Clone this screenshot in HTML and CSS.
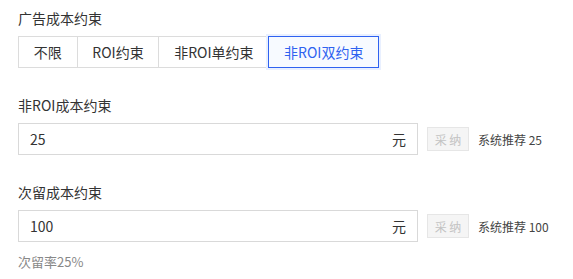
FILE: index.html
```html
<!DOCTYPE html>
<html lang="zh-CN">
<head>
  <meta charset="UTF-8" />
  <title>成本约束</title>
  <link rel="stylesheet" href="styles.css">
</head>
<body>
  <div class="form">
    <div class="field">
      <div class="label">广告成本约束</div>
      <div class="segmented">
        <button class="seg">不限</button>
        <button class="seg">ROI约束</button>
        <button class="seg">非ROI单约束</button>
        <button class="seg active">非ROI双约束</button>
      </div>
    </div>

    <div class="field">
      <div class="label">非ROI成本约束</div>
      <div class="row">
        <div class="input">
          <span class="value">25</span>
          <span class="unit">元</span>
        </div>
        <button class="adopt" disabled>采 纳</button>
        <span class="suggest">系统推荐 25</span>
      </div>
    </div>

    <div class="field">
      <div class="label">次留成本约束</div>
      <div class="row">
        <div class="input">
          <span class="value">100</span>
          <span class="unit">元</span>
        </div>
        <button class="adopt" disabled>采 纳</button>
        <span class="suggest">系统推荐 100</span>
      </div>
      <div class="hint">次留率25%</div>
    </div>
  </div>
</body>
</html>
```

FILE: styles.css
```css
* {
  box-sizing: border-box;
  margin: 0;
  padding: 0;
}

body {
  font-family: "Noto Sans CJK SC", "Noto Sans", sans-serif;
  color: #333;
  background-color: #fff;
  overflow: hidden;
}

.form {
  padding: 7px 18px 0;
}

.field {
  margin-bottom: 26px;
}

.field:last-child {
  margin-bottom: 0;
}

.label {
  font-size: 14px;
  line-height: 22px;
  margin-bottom: 7px;
}

.segmented {
  display: flex;
}

.seg {
  height: 32px;
  padding: 0 14.75px;
  font-family: inherit;
  font-size: 14px;
  color: #333;
  background-color: #fff;
  border: 1px solid #dcdcdc;
  margin-left: -1px;
  cursor: pointer;
}

.seg:first-child {
  margin-left: 0;
}

.seg.active {
  color: #2f62f0;
  background-color: #f7faff;
  border-color: #2f62f0;
  box-shadow: 0 0 0 2px #e9f0ff;
  position: relative;
}

.row {
  display: flex;
  align-items: center;
}

.input {
  width: 400px;
  height: 32px;
  border: 1px solid #d9d9d9;
  padding: 0 11px;
  display: flex;
  align-items: center;
  justify-content: space-between;
  font-size: 14px;
}

.adopt {
  margin-left: 9px;
  width: 42px;
  height: 24px;
  font-family: inherit;
  font-size: 12px;
  color: #c3c3c3;
  background-color: #f5f5f5;
  border: 1px solid #e6e6e6;
}

.suggest {
  margin-left: 9px;
  font-size: 12px;
  color: #444;
}

.hint {
  margin-top: 10px;
  font-size: 13px;
  line-height: 20px;
  color: #888;
}
```
